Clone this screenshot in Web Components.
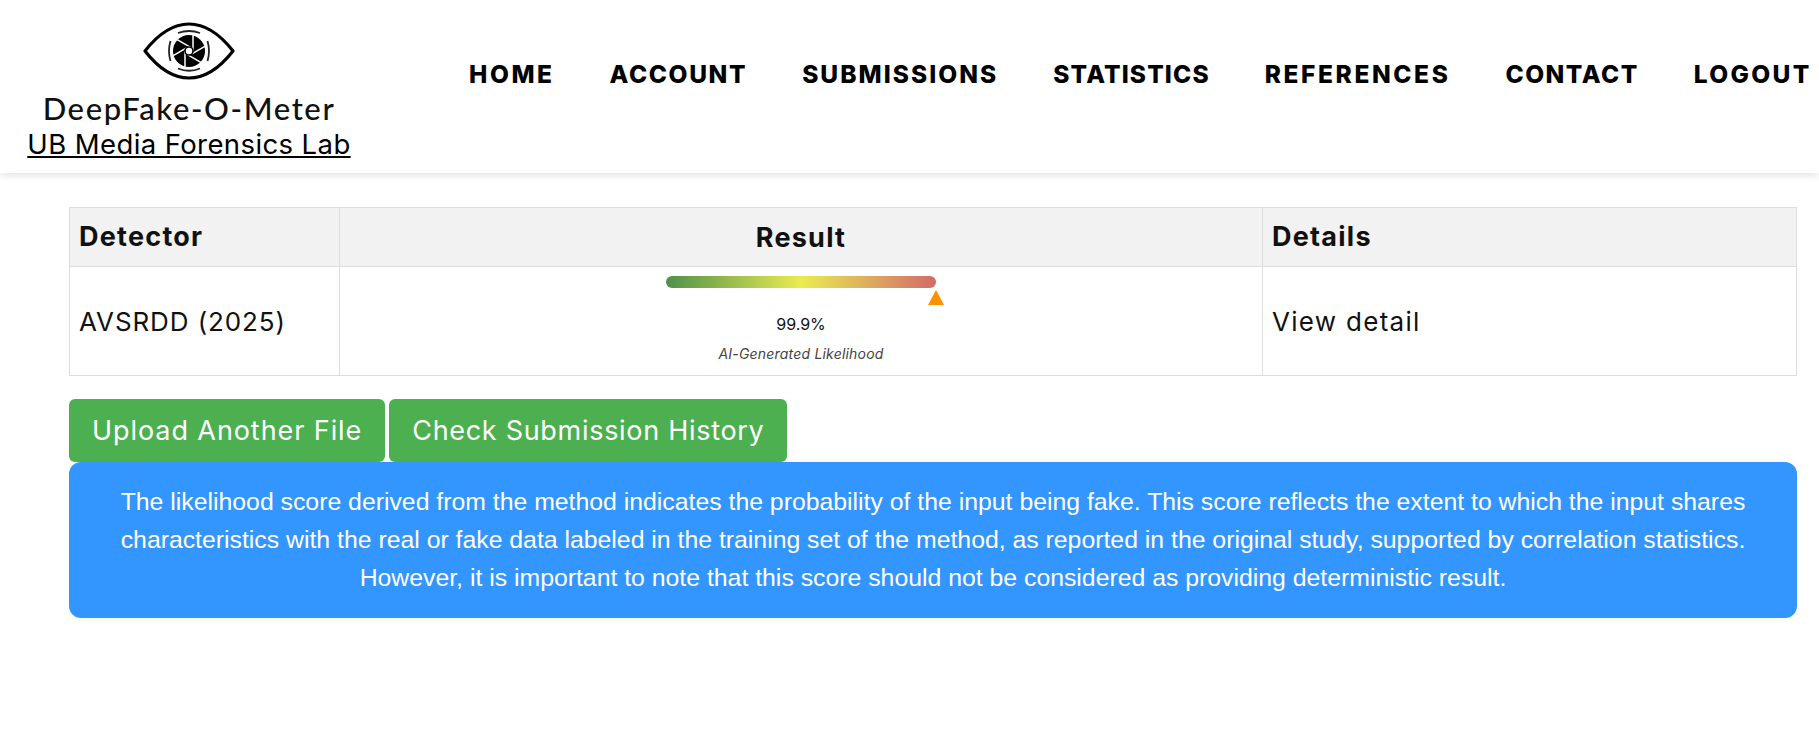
<!DOCTYPE html>
<html lang="en"><head><meta charset="utf-8"><title>DeepFake-O-Meter</title>
<style>
html,body{margin:0;padding:0;background:#fff}
body{font-family:Inter,"Open Sans",sans-serif;color:#111;height:734px;overflow:hidden}
</style></head><body>
<site-header>
  <brand-logo slot="brand"></brand-logo>
  <nav-link style="--ls:2.55px">HOME</nav-link><nav-link style="--ls:1.62px">ACCOUNT</nav-link><nav-link style="--ls:2.05px">SUBMISSIONS</nav-link><nav-link style="--ls:1.15px">STATISTICS</nav-link><nav-link style="--ls:2.6px">REFERENCES</nav-link><nav-link style="--ls:1.5px">CONTACT</nav-link><nav-link style="--ls:2.33px">LOGOUT</nav-link>
</site-header>
<page-main>
  <result-table></result-table>
  <action-row><green-button style="--ls:.92px">Upload Another File</green-button><green-button style="--ls:.7px">Check Submission History</green-button></action-row>
  <info-box>The likelihood score derived from the method indicates the probability of the input being fake. This score reflects the extent to which the input shares characteristics with the real or fake data labeled in the training set of the method, as reported in the original study, supported by correlation statistics. However, it is important to note that this score should not be considered as providing deterministic result.</info-box>
</page-main>
<script>
function def(name,html){customElements.define(name,class extends HTMLElement{constructor(){super();this.attachShadow({mode:'open'}).innerHTML=html}})}
def('site-header',`<style>:host{display:flex;height:173px;box-sizing:border-box;background:#fff;box-shadow:0 2px 8px rgba(0,0,0,.12);position:relative}
.b{width:378px;flex:none}.n{display:flex;gap:55px;margin-left:91px;padding-top:55px;align-items:flex-start}</style>
<div class="b"><slot name="brand"></slot></div><div class="n"><slot></slot></div>`);
def('nav-link',`<style>:host{display:block;font:800 24.5px/38px Inter,sans-serif;color:#000;letter-spacing:var(--ls,2px);white-space:nowrap}</style><slot></slot>`);
const blades=[0,60,120,180,240,300].map(a=>`<path d="M4 0V-16" transform="rotate(${a})"/>`).join('');
def('brand-logo',`<style>:host{display:flex;flex-direction:column;align-items:center;padding-top:21px}
svg{display:block}
.t{font:500 31px/36px Lato,sans-serif;letter-spacing:1.6px;color:#111;margin-top:9px}
a{font:400 27.5px/34px Inter,sans-serif;color:#000;text-decoration:underline;letter-spacing:.4px;white-space:nowrap;margin-top:1px}</style>
<svg width="92" height="60" viewBox="0 0 92 60" aria-hidden="true">
<path d="M2 30C16 12 30 3 46 3s30 9 44 27C76 48 62 57 46 57S16 48 2 30Z" fill="none" stroke="#000" stroke-width="3.2" stroke-linejoin="round"/>
<circle cx="46" cy="30" r="16" fill="#000"/>
<g transform="translate(46 30)" stroke="#fff" stroke-width="1.5" fill="none">${blades}</g>
<circle cx="46" cy="30" r="4" fill="#fff" stroke="#000" stroke-width="1.6"/>
<g fill="none" stroke="#222" stroke-width="1.8">
<path d="M35 12Q46 8 57 12M35 47.500Q46 52 57 47.500M27.500 20Q24.500 30 27.500 40M64.500 20Q67.500 30 64.500 40"/>
</g></svg>
<div class="t">DeepFake-O-Meter</div><a href="#">UB Media Forensics Lab</a>`);
def('page-main',`<style>:host{display:block;padding:34px 22px 0 69px}</style><slot></slot>`);
def('score-meter',`<style>:host{display:flex;flex-direction:column;align-items:center;letter-spacing:0}
.w{position:relative;width:270px;height:30px;margin-top:9px}
.bar{height:12px;border-radius:6px;background:linear-gradient(90deg,#4f9149,#eaec50 50%,#d46a6a)}
.tri{position:absolute;left:262px;top:14px;width:0;height:0;border-left:8px solid transparent;border-right:8px solid transparent;border-bottom:15px solid #ff9100}
.v{font:400 16px/20px Inter,sans-serif;color:#111;margin-top:8px}
.l{font:italic 400 14px/16px Inter,sans-serif;letter-spacing:.2px;color:#444;margin-top:12px}</style>
<div class="w"><div class="bar"></div><div class="tri"></div></div><div class="v">99.9%</div><div class="l">AI-Generated Likelihood</div>`);
def('result-table',`<style>:host{display:block}
table{border-collapse:collapse;width:100%;table-layout:fixed;font-family:Inter,sans-serif;color:#111}
th,td{border:1px solid #ddd;padding:0 9px;text-align:left;font-size:26px;letter-spacing:.9px}
th{background:#f2f2f2;font-weight:700;height:59px;font-size:27px;letter-spacing:1.25px;padding-bottom:1px;box-sizing:border-box}
td{height:108px;font-weight:400}
td.d{letter-spacing:1.3px}
.c{text-align:center;padding:0;vertical-align:top}</style>
<table><colgroup><col style="width:270px"><col style="width:923px"><col></colgroup>
<tr><th>Detector</th><th class="c" style="vertical-align:middle">Result</th><th>Details</th></tr>
<tr><td>AVSRDD (2025)</td><td class="c"><score-meter></score-meter></td><td class="d">View detail</td></tr></table>`);
def('action-row',`<style>:host{display:flex;gap:4px;margin-top:23px}</style><slot></slot>`);
def('green-button',`<style>:host{display:block;background:#4caf50;color:#fff;font:400 27px/63px Inter,sans-serif;letter-spacing:var(--ls,.85px);padding:0 23px;border-radius:6px;white-space:nowrap}</style><slot></slot>`);
def('info-box',`<style>:host{display:block;box-sizing:border-box;height:156px;background:#3396ff;color:#fff;border-radius:12px;padding:21px 40px 0;text-align:center;font:400 24.8px/38px "Liberation Sans",Arial,sans-serif}</style><slot></slot>`);
</script>
</body></html>
